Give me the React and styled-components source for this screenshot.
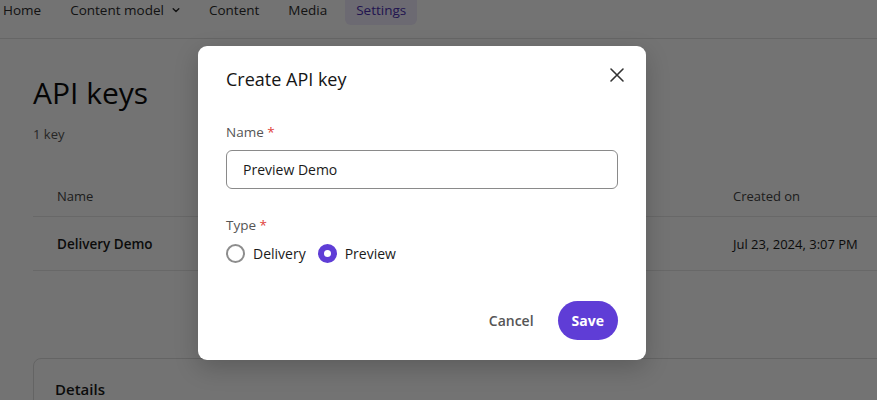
import React from 'react';
import styled, { createGlobalStyle } from 'styled-components';

const font = '"Open Sans", "Noto Sans", sans-serif';
const purple = '#5f3dd6';

const GlobalStyle = createGlobalStyle`
  html, body {
    margin: 0;
    padding: 0;
    background: #ffffff;
    font-family: ${font};
    color: #1a1a1a;
    overflow: hidden;
  }
`;

const Page = styled.div`
  width: 877px;
  height: 400px;
  position: relative;
  overflow: hidden;
`;

const Nav = styled.nav`
  display: flex;
  align-items: flex-start;
  gap: 7px;
  height: 38px;
  margin-left: -8px;
  border-bottom: 1px solid #e2e2e2;
`;

const NavItem = styled.div`
  display: flex;
  align-items: center;
  gap: 8px;
  height: 30px;
  margin-top: -5px;
  padding: 0 11px;
  border-radius: 6px;
  font-size: 13.5px;
  font-weight: 500;
  color: ${(p) => (p.$active ? '#4a2fb0' : '#2b2b2b')};
  background: ${(p) => (p.$active ? '#efeafd' : 'transparent')};
`;

const Main = styled.main`
  padding: 0 0 0 33px;
`;

const Title = styled.h1`
  margin: 34px 0 0;
  font-size: 30px;
  font-weight: 500;
  line-height: 40px;
  color: #0d0d0d;
`;

const Count = styled.div`
  margin-top: 12px;
  font-size: 13px;
  color: #555;
`;

const Table = styled.div`
  margin-top: 33px;
  width: 900px;
`;

const Row = styled.div`
  display: grid;
  grid-template-columns: 676px 1fr;
  align-items: center;
  height: ${(p) => p.$h}px;
  padding-left: 24px;
  border-bottom: 1px solid #e6e6e6;
  font-size: 13px;
  font-weight: ${(p) => (p.$head ? 500 : 400)};
  color: ${(p) => (p.$head ? '#444' : '#1a1a1a')};
`;

const Strong = styled.span`
  font-weight: 600;
  font-size: 13.5px;
`;

const Card = styled.section`
  margin-top: 87px;
  width: 900px;
  height: 80px;
  border: 1px solid #ddd;
  border-radius: 8px;
  padding: 20px 21px;
  box-sizing: border-box;
`;

const CardTitle = styled.h2`
  margin: 0;
  font-size: 15px;
  font-weight: 600;
`;

const Overlay = styled.div`
  position: absolute;
  inset: 0;
  background: rgba(0, 0, 0, 0.55);
  display: flex;
  align-items: flex-start;
  justify-content: center;
  padding: 46px 33px 0 0;
`;

const Modal = styled.div`
  width: 448px;
  height: 314px;
  box-sizing: border-box;
  background: #fff;
  border-radius: 9px;
  box-shadow: 0 8px 24px rgba(0, 0, 0, 0.2);
  padding: 20px 28px 20px;
  display: flex;
  flex-direction: column;
`;

const ModalHeader = styled.div`
  display: flex;
  justify-content: space-between;
  align-items: flex-start;
  height: 32px;
`;

const ModalTitle = styled.h3`
  margin: 0;
  padding-top: 1px;
  font-size: 18px;
  font-weight: 500;
  line-height: 24px;
  color: #151515;
`;

const Close = styled.button`
  border: none;
  background: none;
  padding: 0;
  margin-right: -8px;
  width: 18px;
  height: 18px;
  display: flex;
  align-items: center;
  justify-content: center;
  color: #333;
`;

const Label = styled.div`
  font-size: 13.5px;
  font-weight: 500;
  color: #555;
  line-height: 18px;
  margin-top: ${(p) => p.$mt}px;
`;

const Star = styled.span`
  color: #e0413a;
`;

const Input = styled.div`
  margin-top: 9px;
  height: 39px;
  box-sizing: border-box;
  border: 1px solid #8a8a8a;
  border-radius: 6px;
  padding: 0 16px;
  display: flex;
  align-items: center;
  font-size: 14px;
  color: #1a1a1a;
`;

const RadioGroup = styled.div`
  display: flex;
  align-items: center;
  gap: 12px;
  margin-top: 10px;
`;

const RadioOption = styled.label`
  display: flex;
  align-items: center;
  gap: 8px;
  font-size: 14px;
  color: #1a1a1a;
`;

const Circle = styled.span`
  width: 19px;
  height: 19px;
  box-sizing: border-box;
  border-radius: 50%;
  border: ${(p) => (p.$checked ? `6px solid ${purple}` : '2px solid #8d8d8d')};
  background: #fff;
`;

const Footer = styled.div`
  margin-top: auto;
  display: flex;
  justify-content: flex-end;
  align-items: center;
  gap: 10px;
`;

const TextButton = styled.button`
  border: none;
  background: none;
  font-family: ${font};
  font-size: 14px;
  font-weight: 600;
  color: #555;
  padding: 0 14px;
  height: 39px;
`;

const PrimaryButton = styled.button`
  border: none;
  background: ${purple};
  color: #fff;
  font-family: ${font};
  font-size: 14px;
  font-weight: 700;
  height: 39px;
  padding: 0 14px;
  border-radius: 20px;
`;

const Chevron = () => (
  <svg width="8" height="8" viewBox="0 0 10 10" fill="none" stroke="currentColor" strokeWidth="1.8" strokeLinecap="round" strokeLinejoin="round">
    <path d="M1.5 3.5L5 7l3.5-3.5" />
  </svg>
);

const XIcon = () => (
  <svg width="16" height="16" viewBox="0 0 16 16" fill="none" stroke="currentColor" strokeWidth="1.6" strokeLinecap="round">
    <path d="M2 2l12 12M14 2L2 14" />
  </svg>
);

export default function App() {
  return (
    <Page>
      <GlobalStyle />
      <Nav>
        <NavItem>Home</NavItem>
        <NavItem>
          Content model
          <Chevron />
        </NavItem>
        <NavItem>Content</NavItem>
        <NavItem>Media</NavItem>
        <NavItem $active>Settings</NavItem>
      </Nav>
      <Main>
        <Title>API keys</Title>
        <Count>1 key</Count>
        <Table>
          <Row $head $h={40}>
            <span>Name</span>
            <span>Created on</span>
          </Row>
          <Row $h={53}>
            <Strong>Delivery Demo</Strong>
            <span>Jul 23, 2024, 3:07 PM</span>
          </Row>
        </Table>
        <Card>
          <CardTitle>Details</CardTitle>
        </Card>
      </Main>
      <Overlay>
        <Modal>
          <ModalHeader>
            <ModalTitle>Create API key</ModalTitle>
            <Close aria-label="Close">
              <XIcon />
            </Close>
          </ModalHeader>
          <Label $mt={25}>
            Name <Star>*</Star>
          </Label>
          <Input>Preview Demo</Input>
          <Label $mt={27}>
            Type <Star>*</Star>
          </Label>
          <RadioGroup>
            <RadioOption>
              <Circle />
              Delivery
            </RadioOption>
            <RadioOption>
              <Circle $checked />
              Preview
            </RadioOption>
          </RadioGroup>
          <Footer>
            <TextButton>Cancel</TextButton>
            <PrimaryButton>Save</PrimaryButton>
          </Footer>
        </Modal>
      </Overlay>
    </Page>
  );
}
